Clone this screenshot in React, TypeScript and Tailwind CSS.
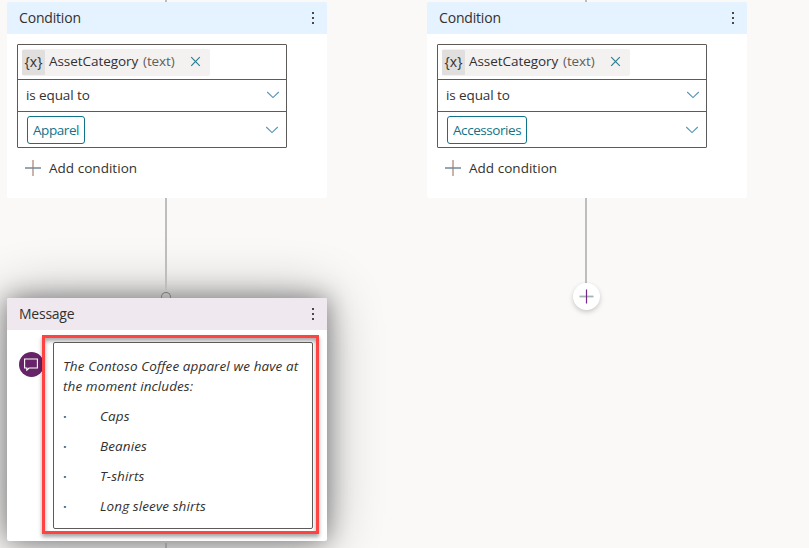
import React from "react";

function Dots() {
  return (
    <svg width="4" height="14" viewBox="0 0 4 14" fill="#4a4948">
      <rect x="1" y="1" width="2" height="2" />
      <rect x="1" y="6" width="2" height="2" />
      <rect x="1" y="11" width="2" height="2" />
    </svg>
  );
}

function Chevron() {
  return (
    <svg width="14" height="8" viewBox="0 0 14 8" fill="none" stroke="#5793b5" strokeWidth="1.1">
      <path d="M1.2 1 7 6.6 12.8 1" />
    </svg>
  );
}

function ConditionCard({ value }: { value: string }) {
  return (
    <section className="h-[196px] overflow-hidden rounded-[2px] bg-white">
      <header className="flex h-8 items-center justify-between bg-[#e5f2ff] px-3">
        <h2 className="text-[14px] leading-5 tracking-[-0.18px]">Condition</h2>
        <Dots />
      </header>
      <div className="mt-[10px] ml-[10px] w-[270px] rounded-[1px] border border-[#5c5b59]">
        <div className="flex h-[35px] items-start border-b border-[#5c5b59] pt-1 pl-1">
          <div className="flex h-[27px] w-[188px] items-start rounded-[2px] bg-[#f3f2f1] pt-px">
            <span className="flex h-[25px] w-[23px] items-center justify-center rounded-[1px] bg-[#e1dfdd] pb-[2px] text-[14px]">{"{x}"}</span>
            <span className="ml-1 w-[90px] text-[13.5px] leading-[23px] tracking-[-0.05px] whitespace-nowrap">AssetCategory</span>
            <span className="ml-1 text-[13.5px] leading-[23px] tracking-[-0.1px] text-[#605e5c]">(text)</span>
            <svg className="mt-[6px] mr-[9px] ml-auto" width="11" height="11" viewBox="0 0 11 11" stroke="#2f7d91" strokeWidth="1.2">
              <path d="M1.2 1.2 9.8 9.8M9.8 1.2 1.2 9.8" />
            </svg>
          </div>
        </div>
        <div className="flex h-8 items-start justify-between border-b border-[#5c5b59] pr-[6px] pl-2">
          <span className="text-[13.5px] leading-[31px] tracking-[-0.1px]">is equal to</span>
          <span className="pt-[11px]"><Chevron /></span>
        </div>
        <div className="flex h-[35px] items-center justify-between pr-[7px] pl-[9px]">
          <span className="flex h-7 items-center rounded-[3px] border border-[#0f7489] px-[5px] pt-px text-[13.5px] tracking-[-0.43px] text-[#0f7489]">{value}</span>
          <Chevron />
        </div>
      </div>
      <div className="mt-[10px] ml-[18px] flex h-5 items-center gap-2">
        <svg width="16" height="16" viewBox="0 0 16 16" fill="none">
          <path d="M8 0v16" stroke="#b99a8c" strokeWidth="1.5" />
          <path d="M0 8h16" stroke="#71879b" strokeWidth="1.5" />
        </svg>
        <span className="text-[13.5px] tracking-[0.03px]">Add condition</span>
      </div>
    </section>
  );
}

function MessageCard() {
  return (
    <section className="relative h-[243px] rounded-[2px] bg-white shadow-[0_0_24px_0_rgba(0,0,0,0.4),0_0_56px_0_rgba(0,0,0,0.32)]">
      <header className="flex h-8 items-center justify-between rounded-t-[2px] bg-[#f0e8ef] px-3">
        <h2 className="text-[14px] leading-5 tracking-[-0.25px]">Message</h2>
        <Dots />
      </header>
      <div className="flex items-start pl-3">
        <div className="mt-[22px] -mr-[2px] flex size-[25px] shrink-0 items-center justify-center rounded-full bg-[#672367] pr-px">
          <svg width="14" height="13" viewBox="0 0 14 13" fill="none" stroke="#fff" strokeWidth="1.1">
            <path d="M.6 1h12.8v9H5L2.8 12.2V10H.6z" />
          </svg>
        </div>
        <div className="relative mt-[5px] h-[199px] w-[277px] border-[3px] border-[#ff4343] pt-1 pr-[3px] pb-[2px] pl-2 shadow-[0_3px_4px_rgba(0,0,0,0.35),inset_0_3px_4px_rgba(0,0,0,0.35)]">
          <div className="h-[187px] w-[260px] rounded-[2px] border border-[#5c5b59] bg-white pt-[13px] pl-[9px] text-[13.5px] leading-5 tracking-[0.1px] italic">
            <p className="whitespace-nowrap">The Contoso Coffee apparel we have at<br />the moment includes:</p>
            {["Caps", "Beanies", "T-shirts", "Long sleeve shirts"].map((item) => (
              <p key={item} className="mt-[10px] flex h-5">
                <span className="w-[37px] pt-px font-semibold text-[#276b8d] not-italic">·</span>
                {item}
              </p>
            ))}
          </div>
        </div>
      </div>
    </section>
  );
}

export default function App() {
  return (
    <main className="flex h-[548px] w-[809px] gap-[100px] overflow-hidden bg-[#faf9f8] pl-[7px] font-['Open_Sans','Noto_Sans',sans-serif] text-[#323130]">
      <div className="w-80">
        <div className="ml-[158px] h-[2px] w-[2px] bg-[#bdbdbd]" />
        <ConditionCard value="Apparel" />
        <div className="relative z-10 ml-[158px] h-[94px] w-[2px] bg-[#bdbdbd]" />
        <div className="relative z-10 ml-[154px] h-[6px] w-[10px] rounded-t-full border border-b-0 border-[#777]" />
        <div className="relative">
          <MessageCard />
        </div>
        <div className="relative z-10 mt-[2px] ml-[158px] h-[5px] w-[2px] bg-[#999]" />
      </div>
      <div className="w-80">
        <div className="ml-[158px] h-[2px] w-[2px] bg-[#bdbdbd]" />
        <ConditionCard value="Accessories" />
        <div className="ml-[158px] h-[85px] w-[2px] bg-[#bdbdbd]" />
        <div className="ml-[146px] flex size-[27px] items-center justify-center rounded-full bg-white shadow-[0_2px_5px_rgba(0,0,0,0.2)]">
          <svg width="15" height="15" viewBox="0 0 15 15">
            <path d="M.5 7.5h14" stroke="#a5b3b4" strokeWidth="1.8" />
            <path d="M7.5.5v14" stroke="#74278a" strokeWidth="1.2" />
          </svg>
        </div>
      </div>
    </main>
  );
}
